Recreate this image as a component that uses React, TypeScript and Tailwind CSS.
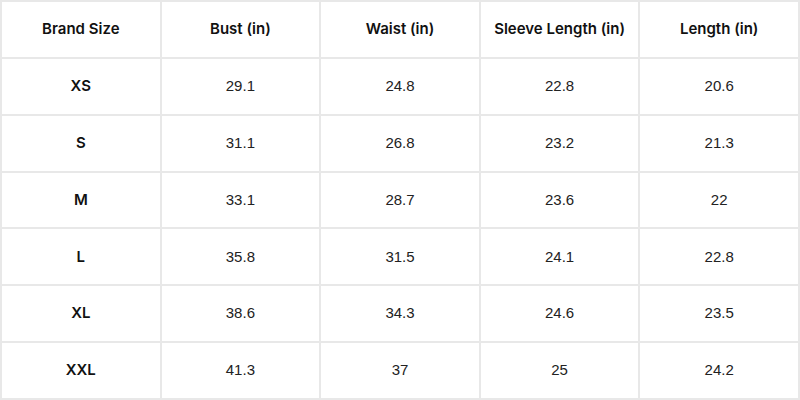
import type * as React from 'react';

const headers = ['Brand Size', 'Bust (in)', 'Waist (in)', 'Sleeve Length (in)', 'Length (in)'];

const rows: ReadonlyArray<[string, string, string, string, string]> = [
  ['XS', '29.1', '24.8', '22.8', '20.6'],
  ['S', '31.1', '26.8', '23.2', '21.3'],
  ['M', '33.1', '28.7', '23.6', '22'],
  ['L', '35.8', '31.5', '24.1', '22.8'],
  ['XL', '38.6', '34.3', '24.6', '23.5'],
  ['XXL', '41.3', '37', '25', '24.2'],
];

const cell = 'flex items-center justify-center border-r-2 border-b-2 border-[#e8e8e8]';

export default function App(): React.ReactElement {
  return (
    <div className="w-[800px] h-[400px] bg-white grid grid-cols-5 grid-rows-7 border-t-2 border-l-2 border-[#e8e8e8] text-[#111] font-['Inter','Open_Sans',sans-serif]">
      {headers.map((h) => (
        <div key={h} className={`${cell} text-[15px] font-semibold`}>
          {h}
        </div>
      ))}
      {rows.map((r) =>
        r.map((v, i) => (
          <div
            key={`${r[0]}-${i}`}
            className={
              i === 0
                ? `${cell} text-[15px] font-semibold`
                : `${cell} text-[15px] font-['Liberation_Sans',Arial,sans-serif] text-[#222]`
            }
          >
            {v}
          </div>
        )),
      )}
    </div>
  );
}
